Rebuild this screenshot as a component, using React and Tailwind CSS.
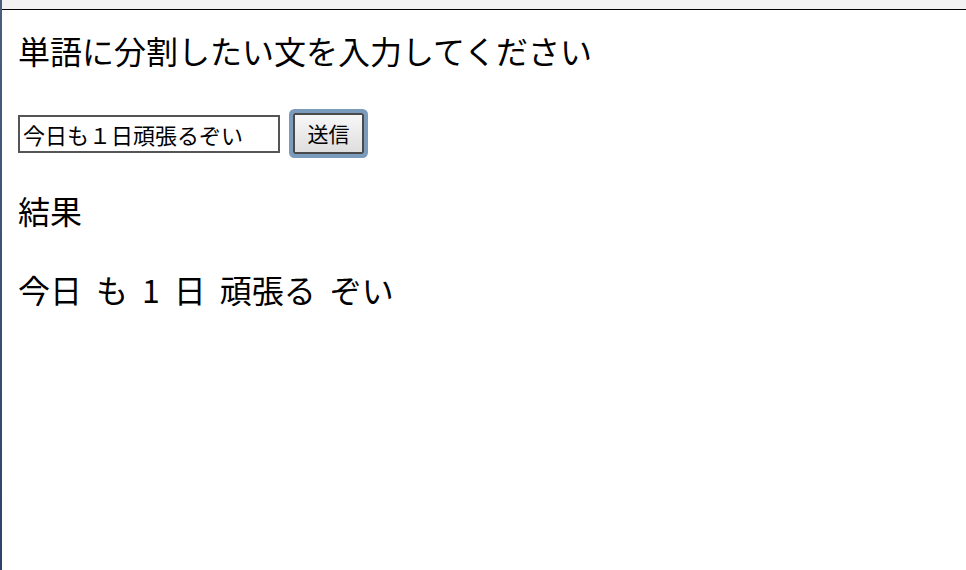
export default function App() {
  const words = ["今日", "も", "1", "日", "頑張る", "ぞい"];
  return (
    <div
      className="flex h-[570px] w-[966px] overflow-hidden bg-white text-black"
      style={{ fontFamily: '"Noto Sans CJK JP", "Noto Sans", sans-serif' }}
    >
      <div className="w-[2px] shrink-0 bg-gradient-to-b from-[#4a5e80] to-[#2f4368]" />
      <div className="flex flex-1 flex-col">
        <div className="h-[10px] shrink-0 border-b border-black bg-[#f2f2f2]" />
        <div className="flex flex-col pl-[16px]">
          <h1 className="mt-[20px] text-[32px] font-normal leading-[40px]">
            単語に分割したい文を入力してください
          </h1>
          <div className="mt-[43px] flex items-center">
            <input
              type="text"
              defaultValue="今日も１日頑張るぞい"
              className="h-[38px] w-[262px] border-2 border-[#555555] bg-white px-[3px] text-[22px] leading-none text-black outline-none"
              style={{ fontFamily: '"Noto Sans CJK JP", sans-serif' }}
            />
            <button
              type="button"
              className="ml-[13px] h-[41px] w-[71px] rounded-[2px] border-2 border-[#4a4a4a] bg-gradient-to-b from-[#f7f7f7] to-[#dedede] text-[21px] leading-none text-black ring-[4px] ring-[#7b9bbd]"
              style={{ fontFamily: '"Noto Sans CJK JP", sans-serif' }}
            >
              送信
            </button>
          </div>
          <h2 className="mt-[36px] text-[32px] font-normal leading-[40px]">結果</h2>
          <div className="mt-[39px] flex gap-[14px] text-[32px] leading-[40px]">
            {words.map((w, i) => (
              <span key={i}>{w}</span>
            ))}
          </div>
        </div>
      </div>
    </div>
  );
}
